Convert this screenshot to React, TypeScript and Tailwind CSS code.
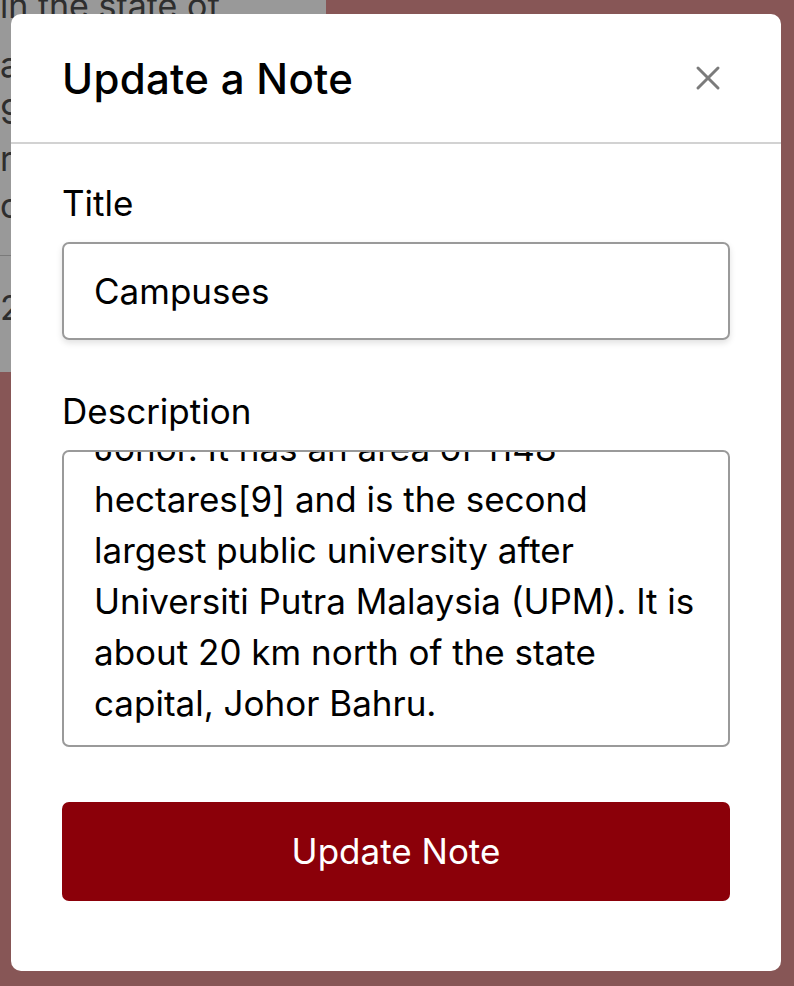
import * as React from 'react';
import { useEffect, useRef } from 'react';

const description =
  'Universiti Teknologi Malaysia (UTM) main campus is located in Skudai, in the state of\n' +
  'Johor. It has an area of 1148\n' +
  'hectares[9] and is the second\n' +
  'largest public university after\n' +
  'Universiti Putra Malaysia (UPM). It is\n' +
  'about 20 km north of the state\n' +
  'capital, Johor Bahru.';

const CloseIcon: React.FC = () => (
  <svg className="w-[26px] h-[26px]" viewBox="0 0 26 26" fill="none" stroke="#7b7b7b" strokeWidth={3} strokeLinecap="round">
    <path d="M3 3 L23 23" />
    <path d="M23 3 L3 23" />
  </svg>
);

const App: React.FC = () => {
  const areaRef = useRef<HTMLTextAreaElement>(null);

  useEffect(() => {
    // the note is long, show the end of it like the scrolled textarea
    if (areaRef.current) {
      areaRef.current.scrollTop = areaRef.current.scrollHeight;
    }
  }, []);

  return (
    <div className="relative w-[794px] h-[986px] overflow-hidden bg-[#875656] font-['Inter','Liberation_Sans',sans-serif]">
      {/* dimmed note card behind the dialog */}
      <div className="w-[326px] h-[390px] -mt-[18px] bg-[#999999] text-[#2e2e2e] text-[34px] leading-[47px]">
        <p>in the state of</p>
        <p className="mt-[12px]">area of 1148</p>
        <p>9] and is the</p>
        <p>rgest public</p>
        <p>crsity after</p>
        <div className="mt-[26px] border-t border-[#7a7a7a] pt-[28px]">
          <p>2021-06-14</p>
        </div>
      </div>

      {/* backdrop + dialog */}
      <div className="absolute inset-0 pl-[11px] pt-[14px]">
        <div className="w-[770px] h-[957px] bg-white rounded-[10px] flex flex-col">
          <div className="h-[130px] flex items-center justify-between pl-[51px] pr-[60px] border-b-2 border-[#d2d2d2]">
            <h1 className="text-[42px] font-medium text-black tracking-[0.3px]">Update a Note</h1>
            <button aria-label="Close" className="flex items-center justify-center">
              <CloseIcon />
            </button>
          </div>

          <div className="flex flex-col px-[51px] pt-[34px]">
            <label className="text-[35px] leading-[50px] text-black">Title</label>
            <input
              defaultValue="Campuses"
              className="mt-[14px] h-[98px] w-full rounded-[7px] border-2 border-[#9a9a9a] px-[30px] text-[35px] text-black shadow-[0_3px_6px_rgba(0,0,0,0.12)] outline-none"
            />

            <label className="mt-[46px] text-[35px] leading-[50px] text-black">Description</label>
            <textarea
              ref={areaRef}
              defaultValue={description}
              className="mt-[14px] h-[297px] w-full resize-none overflow-hidden rounded-[7px] border-2 border-[#9a9a9a] px-[30px] pt-[14px] pb-[16px] text-[35px] leading-[51px] text-black outline-none"
            />

            <button className="mt-[55px] h-[99px] w-full rounded-[7px] bg-[#8b0009] text-[35px] text-white">
              Update Note
            </button>
          </div>
        </div>
      </div>
    </div>
  );
};

export default App;
